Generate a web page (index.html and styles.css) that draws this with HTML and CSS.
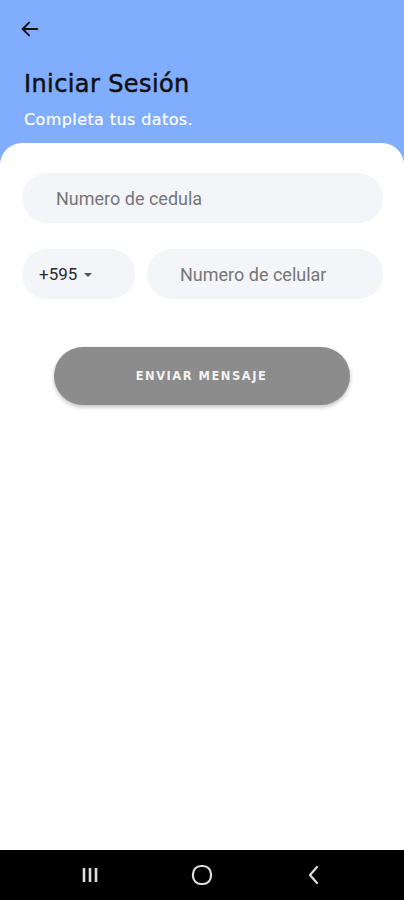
FILE: index.html
```html
<!DOCTYPE html>
<html lang="es">
<head>
    <meta charset="UTF-8">
    <meta name="viewport" content="width=device-width, initial-scale=1.0">
    <title>Iniciar Sesión</title>
    <link rel="stylesheet" href="styles.css">
</head>
<body>
    <div class="screen">
        <div class="header">
            <button class="back" aria-label="Volver">
                <svg width="22" height="22" viewBox="0 0 24 24" fill="none" stroke="#111" stroke-width="2" stroke-linecap="round" stroke-linejoin="round">
                    <path d="M20 12H4"/>
                    <path d="M11 5l-7 7 7 7"/>
                </svg>
            </button>
            <h1 class="title">Iniciar Sesión</h1>
            <p class="subtitle">Completa tus datos.</p>
        </div>

        <div class="sheet">
            <form class="form">
                <input class="field" type="text" placeholder="Numero de cedula">
                <div class="row">
                    <div class="field prefix">+595 <span class="caret"></span></div>
                    <input class="field phone" type="tel" placeholder="Numero de celular">
                </div>
            </form>
            <button class="send">ENVIAR MENSAJE</button>
        </div>

        <div class="navbar">
            <svg width="22" height="22" viewBox="0 0 22 22" fill="none" stroke="#ddd" stroke-width="2.6">
                <path d="M5 4v14M11 4v14M17 4v14"/>
            </svg>
            <svg width="24" height="24" viewBox="0 0 24 24" fill="none" stroke="#ddd" stroke-width="2.2">
                <rect x="3" y="3" width="18" height="18" rx="8"/>
            </svg>
            <svg width="22" height="22" viewBox="0 0 22 22" fill="none" stroke="#ddd" stroke-width="2.2" stroke-linecap="round" stroke-linejoin="round">
                <path d="M14 3l-7 8 7 8"/>
            </svg>
        </div>
    </div>
</body>
</html>
```

FILE: styles.css
```css
body{
    margin: 0;
    background: #80adfd;
    font-family: "DejaVu Sans", sans-serif;
}

.screen{
    width: 404px;
    height: 900px;
    display: flex;
    flex-direction: column;
}

.header{
    padding: 18px 23px 0 24px;
    height: 125px;
    box-sizing: border-box;
}

.back{
    background: none;
    border: none;
    padding: 0;
    margin-left: -5px;
    height: 24px;
    display: block;
    cursor: pointer;
}

.title{
    margin: 28px 0 0 0;
    font-size: 24px;
    font-weight: normal;
    line-height: 28px;
    color: #111;
    letter-spacing: 0.4px;
    -webkit-text-stroke: 0.5px #111;
}

.subtitle{
    margin: 12px 0 0 0;
    font-size: 16px;
    line-height: 19px;
    color: #fff;
    letter-spacing: 0.4px;
    -webkit-text-stroke: 0.2px #fff;
}

.sheet{
    flex: 1;
    background: #fff;
    border-radius: 22px 22px 0 0;
    margin-top: 18px;
    padding: 30px 21px 0 22px;
}

.form{
    display: flex;
    flex-direction: column;
    gap: 26px;
}

.field{
    height: 50px;
    border: none;
    border-radius: 25px;
    background: #f3f5f9;
    padding: 0 0 0 34px;
    font-family: Roboto, sans-serif;
    font-size: 18px;
    color: #333;
    box-sizing: border-box;
    outline: none;
}

.field::placeholder{
    color: #767676;
}

.row{
    display: flex;
    gap: 12px;
}

.prefix{
    flex-shrink: 0;
    width: 113px;
    padding-left: 17px;
    display: flex;
    align-items: center;
    gap: 7px;
    font-size: 17px;
    color: #2a2a2a;
}

.caret{
    border-left: 4px solid transparent;
    border-right: 4px solid transparent;
    border-top: 4px solid #555;
    margin-top: 1px;
}

.phone{
    flex: 1;
    min-width: 0;
    width: 0;
    padding-left: 33px;
}

.send{
    display: block;
    margin: 48px auto 0 auto;
    width: 296px;
    height: 58px;
    border: none;
    border-radius: 29px;
    background: #8c8c8c;
    color: #f2f2f2;
    font-family: "DejaVu Sans", sans-serif;
    font-weight: bold;
    font-size: 11.5px;
    letter-spacing: 1.5px;
    box-shadow: 0 2px 4px rgba(0, 0, 0, 0.25);
    position: relative;
    left: -1px;
}

.navbar{
    height: 50px;
    background: #000;
    display: flex;
    justify-content: center;
    align-items: center;
    gap: 89px;
}
```
